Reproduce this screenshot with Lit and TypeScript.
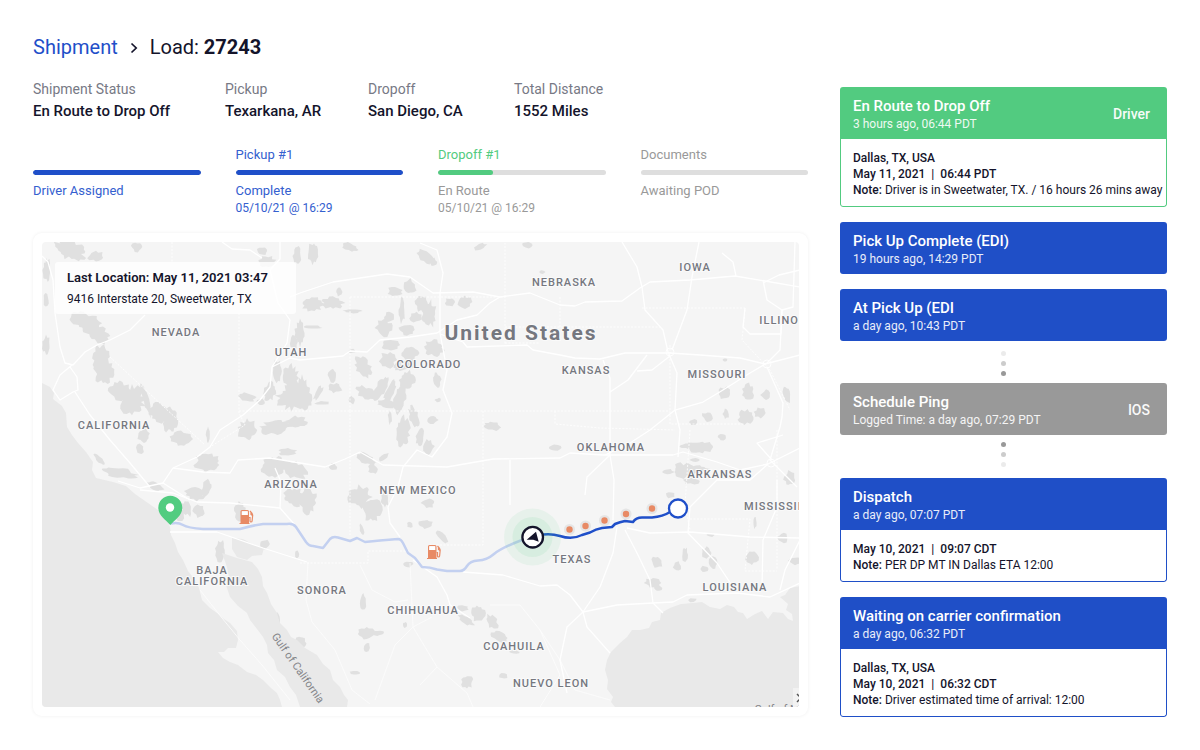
import { LitElement, css, html, svg, nothing } from "lit";
import { customElement, property } from "lit/decorators.js";

type Tone = "blue" | "green" | "grey";

interface Step {
  label: string;
  state: string;
  time?: string;
  percent: number;
  tone: Tone;
}

interface TimelineEvent {
  title: string;
  time: string;
  source?: string;
  tone: Tone;
  place?: string;
  date?: string;
  clock?: string;
  note?: string;
}

const STATS: [string, string][] = [
  ["Shipment Status", "En Route to Drop Off"],
  ["Pickup", "Texarkana, AR"],
  ["Dropoff", "San Diego, CA"],
  ["Total Distance", "1552 Miles"],
];

const STEPS: Step[] = [
  { label: "", state: "Driver Assigned", percent: 100, tone: "blue" },
  { label: "Pickup #1", state: "Complete", time: "05/10/21 @ 16:29", percent: 100, tone: "blue" },
  { label: "Dropoff #1", state: "En Route", time: "05/10/21 @ 16:29", percent: 33, tone: "green" },
  { label: "Documents", state: "Awaiting POD", percent: 0, tone: "grey" },
];

const EVENTS: TimelineEvent[] = [
  {
    title: "En Route to Drop Off", time: "3 hours ago, 06:44 PDT", source: "Driver", tone: "green",
    place: "Dallas, TX, USA", date: "May 11, 2021", clock: "06:44 PDT",
    note: "Driver is in Sweetwater, TX. / 16 hours 26 mins away",
  },
  { title: "Pick Up Complete (EDI)", time: "19 hours ago, 14:29 PDT", tone: "blue" },
  { title: "At Pick Up (EDI", time: "a day ago, 10:43 PDT", tone: "blue" },
  { title: "Schedule Ping", time: "Logged Time: a day ago, 07:29 PDT", source: "IOS", tone: "grey" },
  {
    title: "Dispatch", time: "a day ago, 07:07 PDT", tone: "blue",
    date: "May 10, 2021", clock: "09:07 CDT", note: "PER DP MT IN Dallas ETA 12:00",
  },
  {
    title: "Waiting on carrier confirmation", time: "a day ago, 06:32 PDT", tone: "blue",
    place: "Dallas, TX, USA", date: "May 10, 2021", clock: "06:32 CDT",
    note: "Driver estimated time of arrival: 12:00",
  },
];

const WATER = [
  "M42 383 50 387 54 393 53 399 62 406 66 413 67 427 72 435 78 443 86 452 93 462 92 470 96 478 113 482 126 486 135 494 148 503 158 510 166 518 170 527 171 535 175 543 178 552 183 560 188 571 195 580 199 588 202 600 210 608 217 613 224 619 230 623 237 631 238 640 236 648 228 648 224 652 218 652 223 658 230 662 238 665 247 672 256 675 263 680 271 688 277 693 280 700 282 707H42Z",
  "M222 553 237 558 252 562 258 569 262 577 263 586 267 593 271 604 277 613 280 623 287 630 291 637 297 640 305 648 317 655 323 664 330 670 333 680 340 687 344 695 348 700 347 707H300L296 695 290 687 285 677 277 670 274 660 268 653 267 645 263 637 257 629 250 620 247 613 238 606 230 597 226 585 229 577 227 567Z",
  "M615 707 611 702 613 697 607 689 608 680 605 670 607 660 611 652 620 643 627 637 632 630 640 630 649 628 652 622 660 620 661 613 670 608 681 604 693 603 702 602 710 607 720 609 727 605 734 607 738 612 743 613 747 619 755 614 762 611 768 619 773 612 783 613 788 619 793 621 792 614 786 610 788 604 780 597 785 595 790 588 800 586V707Z",
  "M232 538 243 539 252 544 264 548 262 555 252 556 247 560 237 557 232 549Z",
];

const ROADS = [
  "53,280 55,313 60,347 65,363 73,365 85,352 97,345 110,340 130,330 145,315",
  "72,365 60,375 53,390 60,400 73,392 78,390 77,377 70,367",
  "75,392 90,415 110,440 130,463 150,487",
  "163,483 173,468 197,457 210,447 220,430 243,415 260,400 270,387 272,367 287,343 290,320 278,303 270,270 280,259 280,242",
  "42,256 48,262 53,280",
  "222,242 232,249 250,250 262,258",
  "290,297 300,293",
  "173,468 203,472 230,473 238,460 270,458 300,463 325,467 345,459 360,452 383,465 447,467 493,459 560,458 570,453 603,455 673,455 683,452 717,462 740,470 768,464 800,448",
  "272,367 290,358 300,360 343,356 350,351 367,352 380,340 410,337 437,333 457,320 477,315 490,303 500,297",
  "300,293 333,282 387,274 410,277 433,293 473,292 500,297 530,293 560,305 575,306 585,302 622,301 640,288 650,282 690,280 735,276 765,281 800,287",
  "440,334 463,342 467,347 527,345 533,350 560,355 575,358 600,359 625,353 670,353 700,355 740,358 765,364 800,355",
  "420,243 437,250 443,273 440,293 440,333 447,370 443,390 452,413 447,437 432,457 417,450 403,467 398,487 388,507 390,523 400,537",
  "622,242 637,267 642,287 645,310 663,330 668,352 677,373 675,410 680,430 678,457",
  "699,242 692,277 687,310 672,350",
  "722,253 733,262 736,276",
  "603,360 610,378 610,392 628,380 647,355",
  "610,392 610,455 587,477 585,495",
  "610,455 614,480 613,520",
  "670,356 652,370 637,371",
  "675,410 650,430 630,443 605,455",
  "675,410 703,402 723,390 750,373 767,363",
  "767,363 780,350 782,310 767,300 763,280",
  "800,270 779,275 763,283",
  "795,242 793,307 782,310 781,334 750,334 743,327 745,308",
  "767,367 783,403 782,417 780,427 770,460 797,487",
  "783,435 757,443 772,460",
  "768,464 750,480 717,480 690,507 688,533 717,563 733,587",
  "617,527 613,553 600,587 583,612 567,627 560,660 567,693",
  "625,530 637,553 650,580 653,603 663,613",
  "627,528 650,533 690,532 750,537 800,538",
  "463,572 503,575 513,578 540,586 557,585 570,595 583,612",
  "583,612 617,605 653,603 673,602 687,595 737,593 770,597 800,583",
  "583,612 587,627 610,653",
  "777,480 777,507 763,540 762,587",
  "800,540 785,570 780,590",
  "510,460 510,505",
  "140,490 173,493 197,502 230,503 280,508 295,525",
  "118,481 140,488 163,483 190,500",
  "170,532 217,532 263,548 307,562",
  "413,560 437,577 447,595 450,605 470,618",
  "280,508 281,482 275,468",
];

const TRAILS = [
  "410,563 413,627 437,667 467,693 473,707",
  "490,605 520,605 540,630 560,660 575,690 610,700",
  "308,562 306,600 312,622 335,650 352,690 370,704",
  "360,565 372,590 395,602 408,600",
  "413,627 395,645 375,700",
  "413,627 432,617",
  "437,667 420,685",
  "540,630 560,675 540,707",
  "200,590 222,618 240,640 262,665 290,700",
];

const BORDERS = [
  "172,242 172,262", "239,313 239,413 245,425 210,447", "110,357 205,445",
  "239,411 670,411", "350,297 350,411", "350,297 505,297 505,345",
  "505,297 505,243", "483,411 483,545 430,545", "505,343 540,343",
  "350,411 350,535", "300,563 368,563 368,551 410,551",
  "505,327 660,327", "555,411 555,424 600,428 675,430", "670,345 670,424 745,424",
  "642,308 745,308", "745,310 742,340 770,370 790,410", "690,430 685,505 690,530",
  "690,519 750,519 745,571 777,571", "777,430 777,570", "560,297 560,327",
];

/* Forest and reserve areas: centre x, centre y, half width, half height, rotation. */
const AREAS: number[][] = [
  [70, 250, 16, 9, 20], [96, 256, 8, 5, 0], [47, 270, 4, 11, 0], [46, 300, 3, 6, 0], [46, 345, 4, 9, 0], [137, 247, 6, 5, 0],
  [86, 322, 15, 9, 20], [97, 333, 14, 8, 30], [101, 357, 9, 12, 0], [104, 372, 10, 12, 0], [120, 391, 12, 9, 30], [132, 400, 13, 14, 0], [146, 400, 3, 16, -15],
  [160, 413, 12, 10, 30], [170, 420, 7, 13, 0], [181, 439, 10, 7, 0], [144, 436, 6, 7, 0], [140, 449, 4, 5, 0],
  [207, 463, 13, 9, 0], [100, 460, 8, 3, 45], [120, 473, 17, 5, 10], [208, 435, 2, 8, 0],
  [247, 397, 9, 4, 10], [261, 402, 4, 3, 0], [277, 371, 5, 11, 0], [291, 378, 8, 13, 0], [293, 398, 16, 12, 0], [302, 392, 7, 16, 0], [270, 392, 6, 10, 20],
  [247, 430, 9, 11, 0], [276, 427, 16, 7, -10], [296, 422, 10, 6, 0], [288, 452, 9, 4, 0], [275, 467, 13, 10, 0], [295, 470, 12, 8, 30],
  [267, 262, 9, 6, 0], [262, 251, 6, 4, 0], [297, 256, 4, 9, 0], [300, 333, 5, 12, 0], [294, 342, 4, 7, 0],
  [313, 253, 5, 11, 0], [350, 247, 9, 4, 20], [425, 257, 10, 5, 35], [433, 262, 4, 4, 0],
  [313, 304, 11, 7, 0], [333, 303, 11, 6, 0], [339, 292, 3, 4, 0], [352, 311, 9, 2, 0], [313, 327, 9, 2, 0],
  [395, 292, 8, 5, 0], [402, 310, 3, 14, 0], [410, 287, 6, 8, 0], [422, 304, 7, 8, 0], [429, 314, 7, 13, 0], [416, 317, 6, 5, 0],
  [384, 328, 9, 8, 0], [407, 330, 8, 5, 0], [389, 317, 5, 5, 0], [450, 302, 5, 4, 0], [465, 302, 7, 6, 0],
  [434, 348, 10, 8, 10], [390, 345, 9, 5, 0], [388, 360, 8, 8, 0], [410, 353, 8, 7, 0], [405, 365, 12, 5, -20],
  [363, 367, 7, 11, -30], [352, 351, 4, 2, 0], [332, 375, 5, 7, 0], [335, 388, 7, 5, 0], [318, 393, 3, 8, 30],
  [305, 400, 8, 9, 0], [322, 403, 7, 2, 0], [352, 400, 3, 4, 0], [367, 393, 11, 6, 20], [381, 388, 5, 13, 25], [390, 392, 4, 14, 25], [400, 398, 6, 15, 10],
  [407, 380, 8, 9, 0], [386, 404, 10, 4, 10], [437, 380, 4, 8, -10], [403, 432, 7, 15, 0], [414, 417, 5, 11, -15], [432, 420, 6, 4, -20],
  [420, 437, 4, 9, 10], [428, 447, 6, 8, 20], [390, 417, 2, 7, 0], [438, 400, 3, 2, 0], [493, 426, 9, 4, 10],
  [366, 459, 10, 5, 30], [373, 469, 5, 5, 0], [384, 457, 6, 3, -40], [333, 467, 4, 4, 0], [555, 448, 6, 3, 0],
  [480, 247, 7, 3, -20], [527, 245, 5, 3, 0], [542, 272, 3, 2, 0],
  [725, 393, 7, 6, -15], [748, 392, 6, 9, 0], [766, 395, 5, 5, 0], [787, 395, 4, 9, -10], [693, 422, 5, 3, 0],
  [708, 417, 6, 5, 20], [726, 414, 3, 5, 0], [746, 417, 8, 7, 0], [760, 413, 6, 5, 0], [722, 437, 4, 3, 0],
  [700, 447, 13, 6, 0], [688, 446, 8, 3, 0], [683, 471, 11, 8, 10], [696, 469, 13, 4, 0], [668, 472, 6, 3, 0], [694, 460, 5, 2, 0],
  [790, 478, 6, 8, 0], [725, 360, 3, 2, 0],
  [195, 494, 10, 6, 10], [206, 489, 5, 9, 20], [187, 508, 5, 8, -20], [199, 511, 6, 6, 0], [240, 511, 6, 9, 0], [180, 515, 4, 6, 0],
  [220, 550, 5, 11, 0], [265, 544, 5, 5, 0], [277, 620, 3, 7, 0], [300, 643, 6, 6, 30], [294, 497, 11, 9, 20], [297, 554, 2, 4, 0], [155, 486, 9, 4, 20],
  [360, 497, 11, 11, 0], [372, 510, 9, 12, 0], [308, 500, 9, 13, 0], [385, 498, 4, 9, 0], [410, 525, 3, 3, 0], [426, 524, 7, 5, 0],
  [428, 503, 7, 5, 0], [442, 537, 8, 3, 50], [362, 530, 2, 6, -20], [363, 602, 3, 8, 0], [366, 633, 8, 6, 0], [378, 633, 6, 3, 0], [367, 647, 3, 5, 20],
  [405, 625, 2, 3, 0], [408, 564, 5, 3, 0], [478, 613, 7, 8, 0], [466, 620, 9, 4, 30], [492, 622, 5, 8, -30], [463, 608, 6, 3, 0],
  [500, 637, 9, 5, 20], [467, 682, 6, 7, 0], [503, 676, 5, 3, 0], [355, 673, 6, 2, 0], [302, 643, 3, 7, 0], [515, 652, 5, 2, 0],
  [657, 562, 5, 6, -20], [677, 566, 4, 5, 0], [685, 555, 3, 8, 0], [653, 583, 8, 5, 0], [658, 588, 4, 3, 0],
  [706, 553, 5, 6, 0], [713, 563, 4, 6, 0], [704, 569, 4, 3, 0], [752, 558, 6, 7, 20], [783, 538, 6, 5, 0], [795, 561, 6, 4, 0],
  [755, 523, 2, 6, 0], [692, 600, 5, 2, 0], [670, 495, 5, 3, 0], [692, 481, 9, 3, 0], [711, 535, 4, 2, 0],
];

const LABELS: [number, number, string][] = [
  [695, 271, "IOWA"], [564, 286, "NEBRASKA"], [176, 336, "NEVADA"], [291, 356, "UTAH"],
  [429, 368, "COLORADO"], [586, 374, "KANSAS"], [717, 378, "MISSOURI"], [114, 429, "CALIFORNIA"],
  [611, 451, "OKLAHOMA"], [720, 478, "ARKANSAS"], [291, 488, "ARIZONA"], [418, 494, "NEW MEXICO"],
  [572, 563, "TEXAS"], [735, 591, "LOUISIANA"], [212, 574, "BAJA"], [212, 585, "CALIFORNIA"],
  [322, 594, "SONORA"], [423, 614, "CHIHUAHUA"], [514, 650, "COAHUILA"], [551, 687, "NUEVO LEON"],
  [785, 324, "ILLINOIS"], [781, 510, "MISSISSIPPI"],
];

const STOPS: [number, number][] = [[569.5, 529.5], [585.5, 526], [604.5, 520.5], [626, 514], [652, 508.5]];

/** Irregular outline around an ellipse; the seed keeps each one stable between renders. */
function outline([cx, cy, rx, ry, turn]: number[], seed: number): string {
  let s = seed * 7919 + 17;
  const n = Math.max(10, Math.round((rx + ry) * 1.2));
  const t = (turn * Math.PI) / 180;
  const pts: string[] = [];
  for (let i = 0; i < n; i++) {
    s = (s * 16807 + 11) % 2147483647;
    const k = 0.7 + (s / 2147483647) * 0.5;
    const a = (i / n) * Math.PI * 2;
    const x = Math.cos(a) * rx * k;
    const y = Math.sin(a) * ry * k;
    pts.push(`${(cx + x * Math.cos(t) - y * Math.sin(t)).toFixed(1)},${(cy + x * Math.sin(t) + y * Math.cos(t)).toFixed(1)}`);
  }
  return pts.join(" ");
}

@customElement("route-map")
class RouteMap extends LitElement {
  static styles = css`
    :host { display: block; position: relative; overflow: hidden; border-radius: 4px; }
    .map { display: block; width: 100%; aspect-ratio: 757 / 465; background: #f5f5f5; }
    .water { fill: #e9e9e9; }
    .area { fill: #e0e0e0; }
    .road { fill: none; stroke: #fff; stroke-width: 1.3; stroke-linejoin: round; }
    .trail { fill: none; stroke: #fcfcfc; stroke-width: 0.8; }
    .border { fill: none; stroke: #fff; stroke-width: 0.8; stroke-dasharray: 2 1.5; }
    .label, .country, .sea {
      font-family: Roboto, "Liberation Sans", sans-serif;
      fill: #75777f; stroke: #fafafa; stroke-width: 2px; paint-order: stroke; text-anchor: middle;
    }
    .label { font-size: 11px; font-weight: 500; letter-spacing: 1px; }
    .country { font-size: 21px; font-weight: 700; letter-spacing: 2px; }
    .sea { font-size: 11px; stroke: none; fill: #85868a; }
    .travelled { fill: none; stroke: #1f4fc9; stroke-width: 2.5; stroke-linejoin: round; }
    .remaining { fill: none; stroke: #c3d0f0; stroke-width: 2.5; stroke-linejoin: round; }
    .place {
      position: absolute; top: 20px; left: 13px; padding: 6px 28px 6px 12px;
      border-radius: 3px; background: rgba(255, 255, 255, 0.8); color: #14142b;
    }
    .where { margin: 0; font-size: 13px; line-height: 20px; font-weight: 600; }
    .address { margin: 0; padding-top: 2px; font-size: 12px; line-height: 18px; }
  `;

  private pump(x: number, y: number) {
    return svg`<g transform="translate(${x} ${y})">
      <path fill="#e88a65" fill-rule="evenodd" d="M1 13V1.5Q1 0 2.500 0H8Q9.500 0 9.500 1.500V13H10V14H0V13ZM2.300 1.200V5H8.200V1.200Z"/>
      <path fill="#fff" d="M2.300 1.200H8.200V5H2.300Z"/>
      <path fill="none" stroke="#e88a65" stroke-width="1.200" d="M9.500 7.500H10.500V11Q10.500 12 11.500 12T12.600 11L13.200 5Q13 3.500 10.500 1M11.500 2.200V4.500L13 5.500"/>
    </g>`;
  }

  render() {
    return html`
      <svg class="map" viewBox="42 242 757 465" preserveAspectRatio="xMidYMid slice" role="img" aria-label="Route map">
        ${AREAS.map((a, i) => svg`<polygon class="area" points=${outline(a, i + 1)} />`)}
        ${WATER.map((d) => svg`<path class="water" d=${d} />`)}
        ${BORDERS.map((p) => svg`<polyline class="border" points=${p} />`)}
        ${TRAILS.map((p) => svg`<polyline class="trail" points=${p} />`)}
        ${ROADS.map((p) => svg`<polyline class="road" points=${p} />`)}
        <circle cx="767" cy="364" r="4" fill="none" stroke="#fff"/>
        <circle cx="670" cy="352" r="4" fill="none" stroke="#fff"/>
        <circle cx="771" cy="463" r="4" fill="none" stroke="#fff"/>
        ${LABELS.map(([x, y, t]) => svg`<text class="label" x=${x} y=${y}>${t}</text>`)}
        <text class="country" x="521" y="340">United States</text>
        <text class="sea" transform="translate(295 670) rotate(55)">Gulf of California</text>
        <text class="sea" x="790" y="713">Gulf of Mexico</text>
        <path fill="#f2f2f2" d="M793 688H799V707H793Z"/>
        <path fill="none" stroke="#555" stroke-width="1.500" d="M797 694 800 697M800 699 797 702"/>

        <path class="remaining" d="M171 523.500Q178 522 183 525T203 529H240Q252 525.500 263 524H287Q293 523 296 527L306 542Q309 546 313 546L323 548 330 539Q333 536 338 537.500L350 541 357 538 365 542 380 540.500 398 539Q401 539 403 543L408 553 415 558 422 567Q430 567 437 569.500L447 571H460Q464 571 467 566T478 560.500Q487 560 494 554T522 540"/>
        <path class="travelled" d="M543 534.500Q552 533.500 560 536 572 540 582 535L590 532.500Q596 529 602 528L612 527 615 524Q620 522 625 521L633 522Q636 517.500 642 517.500H652Q663 516.500 670 512"/>
        ${this.pump(239.5, 510)} ${this.pump(427, 545)}
        ${STOPS.map(([x, y]) => svg`<circle cx=${x} cy=${y} r="5.500" fill="#dedede" opacity="0.700"/><circle cx=${x} cy=${y} r="3.200" fill="#e88a65"/>`)}
        <circle cx="678" cy="508.500" r="9" fill="#fff" stroke="#1f4fc9" stroke-width="2.300"/>
        <circle cx="532.500" cy="537" r="28.500" fill="#52cc80" opacity="0.080"/>
        <circle cx="532.500" cy="537" r="20" fill="#52cc80" opacity="0.100"/>
        <circle cx="532.700" cy="537.200" r="10.300" fill="#fff" stroke="#14142b" stroke-width="2.300"/>
        <path fill="#14142b" d="M526.700 539.700 536 531.700 538.700 541.700 533.300 539.700Z"/>
        <path fill="#52cc80" d="M170.300 525C166 520 158.300 515.500 158.300 507.800A12 12 0 0 1 182.300 507.800C182.300 515.500 174.600 520 170.300 525Z"/>
        <circle cx="170" cy="507.500" r="4.200" fill="#fff"/>
      </svg>
      <div class="place">
        <p class="where">Last Location: May 11, 2021 03:47</p>
        <p class="address">9416 Interstate 20, Sweetwater, TX</p>
      </div>
    `;
  }
}

@customElement("event-card")
class EventCard extends LitElement {
  @property({ attribute: false }) event!: TimelineEvent;

  static styles = css`
    :host { display: block; }
    .card { border-radius: 3px; overflow: hidden; }
    .green { --tone: #52cb80; }
    .blue { --tone: #1f4fc7; }
    .grey { --tone: #999; }
    .head {
      display: flex; align-items: center; justify-content: space-between; gap: 12px;
      padding: 9px 17px 7px 13px; background: var(--tone); color: #fff;
    }
    .title { margin: 0; font-size: 15px; line-height: 20px; font-weight: 500; }
    .time { margin: 0; font-size: 12px; line-height: 16px; opacity: 0.9; }
    .source { font-size: 14px; line-height: 20px; font-weight: 500; opacity: 0.95; }
    .body {
      padding: 11px 0 8px 12px; border: 1px solid var(--tone); border-top: 0;
      border-radius: 0 0 3px 3px; font-size: 12px; line-height: 16px; color: #14142b;
    }
    .line { margin: 0; }
    .strong { font-weight: 500; }
    .bar { padding: 0 6px; }
  `;

  render() {
    const e = this.event;
    return html`
      <article class="card ${e.tone}">
        <header class="head">
          <div>
            <h2 class="title">${e.title}</h2>
            <p class="time">${e.time}</p>
          </div>
          ${e.source ? html`<span class="source">${e.source}</span>` : nothing}
        </header>
        ${e.note
          ? html`<div class="body">
              ${e.place ? html`<p class="line strong">${e.place}</p>` : nothing}
              <p class="line strong">${e.date}<span class="bar">|</span>${e.clock}</p>
              <p class="line"><span class="strong">Note:</span> ${e.note}</p>
            </div>`
          : nothing}
      </article>
    `;
  }
}

@customElement("app-root")
class AppRoot extends LitElement {
  static styles = css`
    :host {
      display: block; box-sizing: border-box; min-height: 100vh; padding: 35px 33px 33px;
      background: #fff; color: #14142b; font-family: Roboto, "Liberation Sans", sans-serif;
    }
    .page { display: grid; grid-template-columns: minmax(0, 1fr) 327px; gap: 32px; }
    .crumbs { display: flex; align-items: center; font-size: 20px; line-height: 24px; }
    .link { color: #1f4fc9; text-decoration: none; }
    .chevron { width: 8px; height: 12px; margin: 2px 12px 0; }
    .load { margin: 0; font-size: 20px; font-weight: 400; }
    .number { font-weight: 700; }
    .stats { display: grid; grid-template-columns: 192px 143px 146px auto; margin: 20px 0 25px; }
    .name { font-size: 14px; line-height: 20px; color: #777985; }
    .value { margin: 2px 0 0; font-size: 15px; line-height: 20px; font-weight: 500; }
    .steps { display: grid; grid-template-columns: repeat(4, minmax(0, 1fr)); gap: 35px; margin: 0 0 17px; padding: 0; list-style: none; }
    .step { font-size: 13px; line-height: 18px; color: #999; }
    .step.blue { color: #3460cf; }
    .step.green .label { color: #52cb80; }
    .label { min-height: 18px; }
    .track { height: 5px; margin: 6px 0 7px; border-radius: 3px; background: #dedede; overflow: hidden; }
    .fill { height: 100%; border-radius: 3px; background: #1f4fc9; }
    .green .fill { background: #52cb80; }
    .when { min-height: 16px; font-size: 12px; line-height: 16px; }
    .frame { padding: 9px; border-radius: 9px; background: #fff; box-shadow: 0 0 3px 1px rgba(0, 0, 0, 0.04); }
    .timeline { display: flex; flex-direction: column; gap: 15px; margin: 52px 0 0; padding: 0; list-style: none; }
    .ping { display: flex; flex-direction: column; align-items: center; gap: 7px; margin: -5px 0 -4px; }
    .dots { display: flex; flex-direction: column; gap: 5px; }
    .dots.down { flex-direction: column-reverse; }
    .dot { width: 5px; height: 5px; border-radius: 50%; background: #999; }
    .dot.soft { opacity: 0.5; }
    .dot.faint { opacity: 0.2; }
    .wide { width: 100%; }
  `;

  private dots(down: boolean) {
    return html`<div class="dots ${down ? "down" : ""}" aria-hidden="true">
      <span class="dot faint"></span><span class="dot soft"></span><span class="dot"></span>
    </div>`;
  }

  render() {
    return html`
      <main class="page">
        <section>
          <nav class="crumbs" aria-label="Breadcrumb">
            <a class="link" href="#shipment">Shipment</a>
            <svg class="chevron" viewBox="0 0 8 12" aria-hidden="true">
              <path d="M1.500 1.500 6.200 6 1.500 10.500" fill="none" stroke="#14142b" stroke-width="1.700"/>
            </svg>
            <h1 class="load">Load: <span class="number">27243</span></h1>
          </nav>
          <dl class="stats">
            ${STATS.map(([name, value]) => html`<div><dt class="name">${name}</dt><dd class="value">${value}</dd></div>`)}
          </dl>
          <ol class="steps">
            ${STEPS.map((s) => html`
              <li class="step ${s.tone}">
                <div class="label">${s.label}</div>
                <div class="track" role="progressbar" aria-label=${s.state} aria-valuenow=${s.percent}>
                  <div class="fill" style="width:${s.percent}%"></div>
                </div>
                <div>${s.state}</div>
                <div class="when">${s.time ?? nothing}</div>
              </li>`)}
          </ol>
          <div class="frame"><route-map></route-map></div>
        </section>
        <ol class="timeline">
          ${EVENTS.map((e) => e.tone === "grey"
            ? html`<li class="ping">${this.dots(false)}<event-card class="wide" .event=${e}></event-card>${this.dots(true)}</li>`
            : html`<li><event-card .event=${e}></event-card></li>`)}
        </ol>
      </main>
    `;
  }
}
